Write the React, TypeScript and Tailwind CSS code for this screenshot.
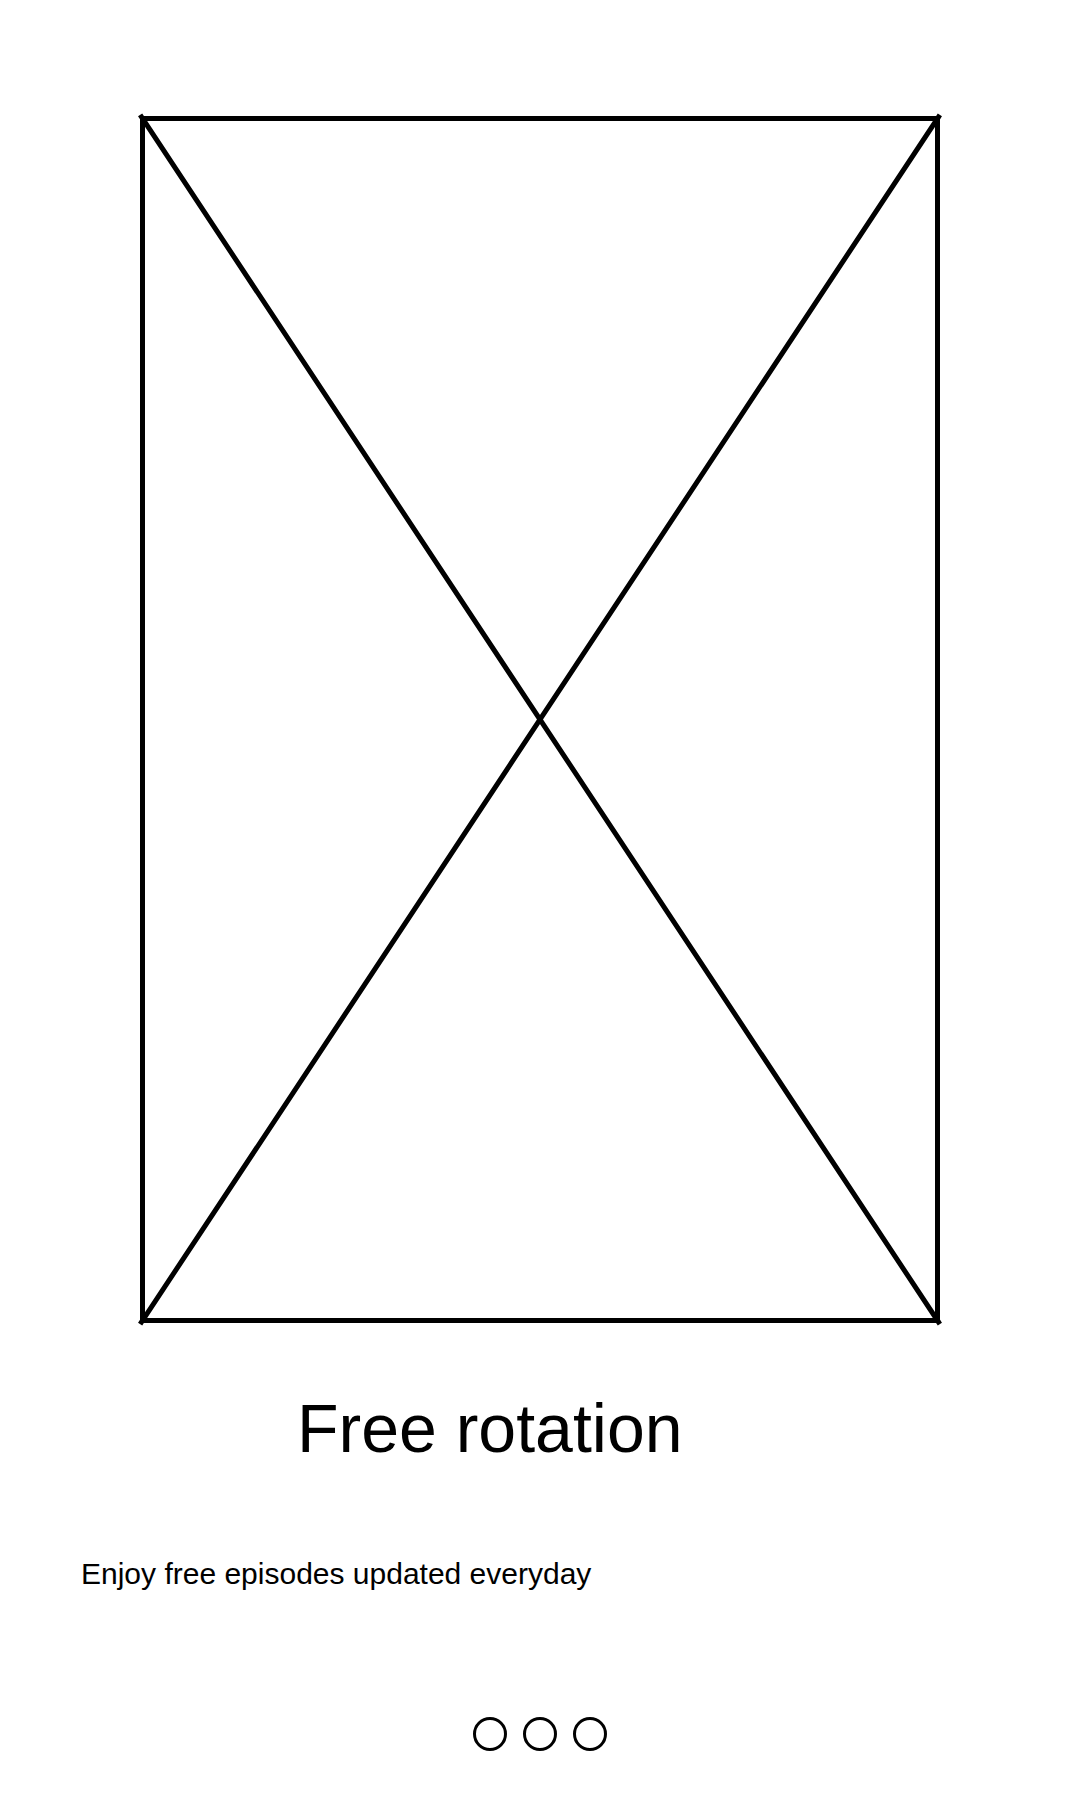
import React from "react";

const slides = ["Slide 1", "Slide 2", "Slide 3"];

export default function App() {
  return (
    <main className="flex min-h-screen flex-col bg-white font-['Liberation_Sans',Arial,sans-serif] text-black">
      <div className="px-[140px] pt-[116px]">
        <svg className="block w-full overflow-visible" viewBox="0 0 800 1208" role="img" aria-label="Image placeholder" fill="none" stroke="#000" strokeWidth="5">
          <rect x="2.5" y="2.5" width="795" height="1202" />
          <path d="M1.5 1 798.5 1206M798.5 1 1.5 1206" strokeLinecap="square" />
        </svg>
      </div>
      <h1 className="mt-16 ml-[297px] text-[68px] leading-[80px]">Free rotation</h1>
      <p className="mt-[86px] ml-[81px] text-[30px] leading-[40px]">Enjoy free episodes updated everyday</p>
      <nav className="mt-[123px] flex justify-center gap-4" aria-label="Slides">
        {slides.map((label) => (
          <button key={label} type="button" aria-label={label} className="size-[34px] rounded-full border-3 border-black bg-white" />
        ))}
      </nav>
    </main>
  );
}
